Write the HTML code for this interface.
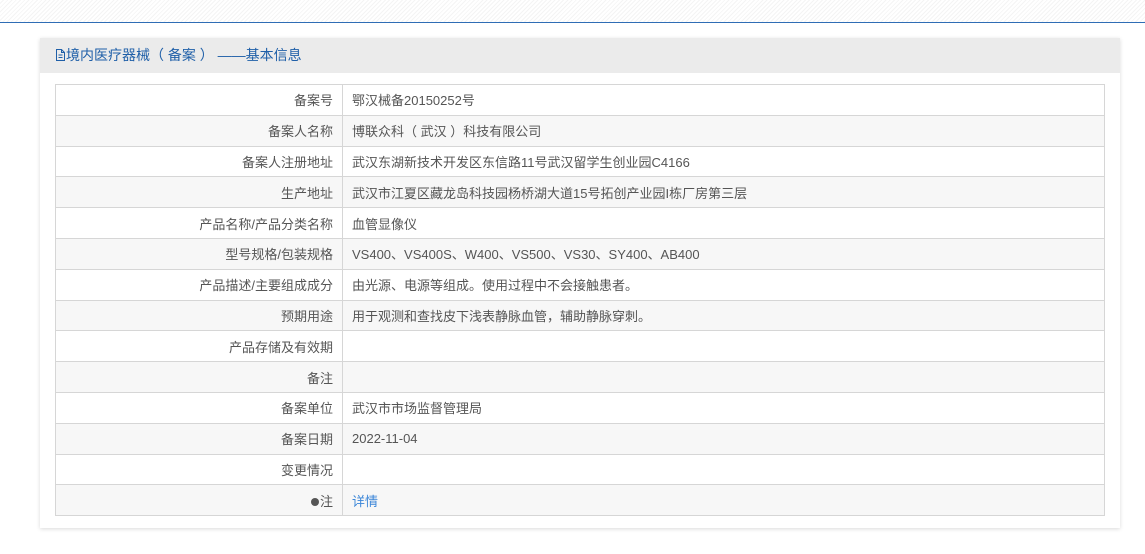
<!DOCTYPE html>
<html><head><meta charset="utf-8"><style>
body{margin:0;background:#fff;font-family:"Liberation Sans","Noto Sans CJK SC",sans-serif;font-size:13px;color:#555;}
.top{position:absolute;left:0;top:0;width:1145px;height:22px;background:repeating-linear-gradient(135deg,#fff 0 2px,#f4f4f4 2px 3px);}
.line{position:absolute;left:0;top:22px;width:1145px;height:1px;background:#2f6db5;}
.panel{position:absolute;left:40px;top:38px;width:1080px;height:490px;background:#fff;box-shadow:0 1px 4px rgba(0,0,0,.15);}
.hd{height:35px;background:#ebebeb;line-height:35px;padding-left:15px;color:#1f5fa8;font-size:14px;}
table{position:absolute;left:15px;top:46px;width:1050px;border-collapse:collapse;}
td{border:1px solid #d6d6d6;height:29.8px;padding:0 9px;white-space:nowrap;}
td.l{width:268px;text-align:right;}
tr:nth-child(even){background:#f7f7f7;}
a{color:#3b86d8;text-decoration:none;}
</style></head><body>
<div class="top"></div><div class="line"></div>
<div class="panel">
<div class="hd"><svg width="11" height="12" viewBox="0 0 11 12" style="vertical-align:-1px"><path d="M1.5 .5h5l3 3v8h-8z M6.5 .5v3h3 M3.5 6h4 M3.5 8.5h4" fill="none" stroke="#1f5fa8"/></svg>境内医疗器械（ 备案 ） ——基本信息</div>
<table>
<tr><td class="l">备案号</td><td>鄂汉械备20150252号</td></tr>
<tr><td class="l">备案人名称</td><td>博联众科（ 武汉 ）科技有限公司</td></tr>
<tr><td class="l">备案人注册地址</td><td>武汉东湖新技术开发区东信路11号武汉留学生创业园C4166</td></tr>
<tr><td class="l">生产地址</td><td>武汉市江夏区藏龙岛科技园杨桥湖大道15号拓创产业园I栋厂房第三层</td></tr>
<tr><td class="l">产品名称/产品分类名称</td><td>血管显像仪</td></tr>
<tr><td class="l">型号规格/包装规格</td><td>VS400、VS400S、W400、VS500、VS30、SY400、AB400</td></tr>
<tr><td class="l">产品描述/主要组成成分</td><td>由光源、电源等组成。使用过程中不会接触患者。</td></tr>
<tr><td class="l">预期用途</td><td>用于观测和查找皮下浅表静脉血管，辅助静脉穿刺。</td></tr>
<tr><td class="l">产品存储及有效期</td><td></td></tr>
<tr><td class="l">备注</td><td></td></tr>
<tr><td class="l">备案单位</td><td>武汉市市场监督管理局</td></tr>
<tr><td class="l">备案日期</td><td>2022-11-04</td></tr>
<tr><td class="l">变更情况</td><td></td></tr>
<tr><td class="l"><span style="display:inline-block;width:8px;height:8px;border-radius:50%;background:#555;margin-right:1px"></span>注</td><td><a>详情</a></td></tr>
</table>
</div>
</body></html>
